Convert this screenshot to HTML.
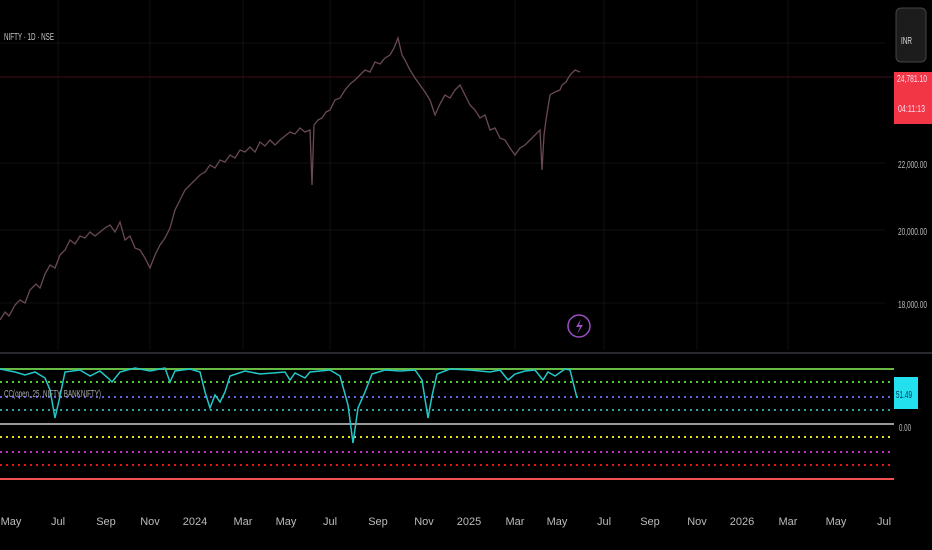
<!DOCTYPE html>
<html><head><style>
body{margin:0;background:#000;width:932px;height:550px;overflow:hidden;font-family:"Liberation Sans",sans-serif;}
svg{position:absolute;left:0;top:0}
</style></head><body>
<svg width="932" height="550" viewBox="0 0 932 550">
<rect width="932" height="550" fill="#000"/>
<g stroke="#111" stroke-width="1">
<line x1="0" y1="43" x2="885" y2="43"/><line x1="0" y1="163" x2="885" y2="163"/>
<line x1="0" y1="230" x2="885" y2="230"/><line x1="0" y1="303" x2="885" y2="303"/>
<line x1="58" y1="0" x2="58" y2="350"/><line x1="150" y1="0" x2="150" y2="350"/><line x1="243" y1="0" x2="243" y2="350"/><line x1="330" y1="0" x2="330" y2="350"/><line x1="424" y1="0" x2="424" y2="350"/><line x1="515" y1="0" x2="515" y2="350"/><line x1="604" y1="0" x2="604" y2="350"/><line x1="697" y1="0" x2="697" y2="350"/><line x1="788" y1="0" x2="788" y2="350"/>
</g>
<line x1="0" y1="77" x2="893" y2="77" stroke="#3a1018" stroke-width="1"/>
<polyline fill="none" stroke="#6a4a52" stroke-width="1.3" points="0,320 5,312 9,316 15,305 20,300 25,303 30,290 36,284 40,288 45,274 50,265 55,268 60,255 65,250 70,240 75,244 80,236 85,238 90,232 95,236 100,232 105,228 110,225 115,232 120,222 125,240 130,236 135,248 140,250 145,258 150,268 155,255 160,245 165,238 170,228 175,210 180,200 185,190 190,185 195,180 200,175 205,172 210,165 215,168 220,160 225,162 230,155 235,158 240,150 245,152 250,147 255,152 260,142 265,146 270,140 275,145 280,140 285,136 290,132 295,134 300,128 305,132 310,130 312,185 314,125 318,120 322,118 326,112 330,110 335,100 340,98 345,90 350,84 355,80 360,75 365,70 370,72 375,62 380,64 385,58 390,55 394,48 398,38 402,55 405,60 410,70 415,78 420,85 425,92 430,100 435,115 440,104 445,95 450,98 455,90 460,85 465,95 470,105 475,110 480,118 485,115 490,130 495,128 500,138 505,140 510,148 515,155 520,148 525,145 530,140 535,135 540,130 542,170 544,135 546,120 550,95 555,92 560,90 562,85 566,82 570,75 575,70 580,72"/>
<circle cx="579" cy="326" r="11" fill="none" stroke="#9b4fc0" stroke-width="1.5"/>
<path d="M581 319 L576 327 L580 327 L577 334 L583 325 L579 325 Z" fill="#9b4fc0"/>
<text x="4" y="40" fill="#c8c8c8" font-size="10" textLength="50" lengthAdjust="spacingAndGlyphs">NIFTY · 1D · NSE</text>
<rect x="896" y="8" width="30" height="54" rx="5" fill="#1c1c1c" stroke="#444"/>
<text x="901" y="44" fill="#ddd" font-size="10" textLength="11" lengthAdjust="spacingAndGlyphs">INR</text>
<rect x="894" y="72" width="38" height="52" fill="#f23645"/>
<text x="897" y="82" fill="#fde" font-size="10" textLength="30" lengthAdjust="spacingAndGlyphs">24,781.10</text>
<text x="898" y="112" fill="#fde" font-size="10" textLength="27" lengthAdjust="spacingAndGlyphs">04:11:13</text>
<g fill="#bbb" font-size="10"><text x="898" y="168" textLength="29" lengthAdjust="spacingAndGlyphs">22,000.00</text><text x="898" y="235" textLength="29" lengthAdjust="spacingAndGlyphs">20,000.00</text><text x="898" y="308" textLength="29" lengthAdjust="spacingAndGlyphs">18,000.00</text></g>
<line x1="0" y1="353" x2="932" y2="353" stroke="#2a2a2e" stroke-width="2"/>
<line x1="0" y1="369" x2="894" y2="369" stroke="#66bb44" stroke-width="2"/>
<g stroke-width="2" stroke-dasharray="2 4">
<line x1="0" y1="382" x2="894" y2="382" stroke="#4ccc30"/>
<line x1="0" y1="397" x2="894" y2="397" stroke="#6060e0"/>
<line x1="0" y1="410" x2="894" y2="410" stroke="#30a0a0"/>
<line x1="0" y1="437" x2="894" y2="437" stroke="#e0e020"/>
<line x1="0" y1="452" x2="894" y2="452" stroke="#c030c0"/>
<line x1="0" y1="465" x2="894" y2="465" stroke="#e01818"/>
</g>
<line x1="0" y1="424" x2="894" y2="424" stroke="#999" stroke-width="2"/>
<line x1="0" y1="479" x2="894" y2="479" stroke="#f05050" stroke-width="2"/>
<polyline fill="none" stroke="#22c8c8" stroke-width="1.5" points="0,369 15,372 25,375 35,372 45,378 50,390 55,418 60,396 65,372 80,370 90,376 100,371 108,378 112,382 120,372 135,368 150,371 165,368 170,382 175,371 190,369 200,372 205,392 210,408 215,395 220,402 225,392 230,376 245,371 260,374 285,372 290,380 295,373 305,378 310,372 330,370 340,376 348,405 353,443 358,408 365,392 372,374 385,370 400,371 415,370 422,380 428,418 432,396 437,374 450,369 470,370 490,372 500,370 508,380 515,374 525,371 535,370 543,380 548,372 555,376 565,369 570,370 575,390 577,398"/>
<text x="4" y="397" fill="#aaa" font-size="10" textLength="97" lengthAdjust="spacingAndGlyphs">CC(open, 25, NIFTY, BANKNIFTY)</text>
<rect x="894" y="377" width="24" height="32" fill="#22e0ee"/>
<text x="896" y="398" fill="#035" font-size="10" textLength="16" lengthAdjust="spacingAndGlyphs">51.49</text>
<text x="899" y="431" fill="#bbb" font-size="10" textLength="12" lengthAdjust="spacingAndGlyphs">0.00</text>
<g fill="#bbb" font-size="11" text-anchor="middle" transform="scale(1,1)">
<text x="11" y="525">May</text><text x="58" y="525">Jul</text><text x="106" y="525">Sep</text><text x="150" y="525">Nov</text><text x="195" y="525">2024</text><text x="243" y="525">Mar</text><text x="286" y="525">May</text><text x="330" y="525">Jul</text><text x="378" y="525">Sep</text><text x="424" y="525">Nov</text><text x="469" y="525">2025</text><text x="515" y="525">Mar</text><text x="557" y="525">May</text><text x="604" y="525">Jul</text><text x="650" y="525">Sep</text><text x="697" y="525">Nov</text><text x="742" y="525">2026</text><text x="788" y="525">Mar</text><text x="836" y="525">May</text><text x="884" y="525">Jul</text>
</g>
</svg>
</body></html>
